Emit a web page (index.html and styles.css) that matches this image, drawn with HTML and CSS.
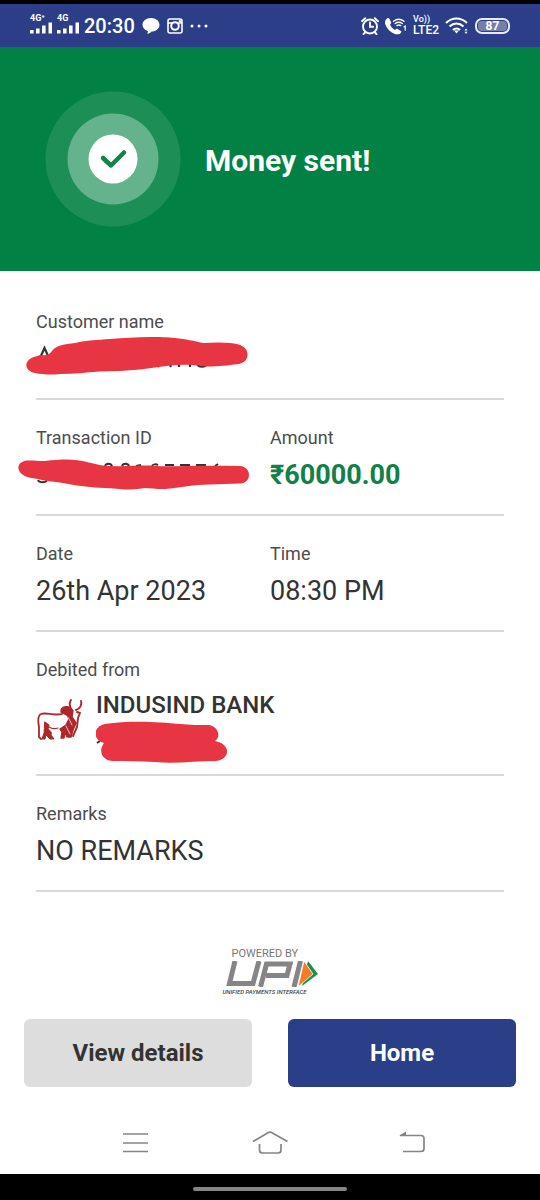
FILE: index.html
```html
<!DOCTYPE html>
<html lang="en">
<head>
<meta charset="utf-8">
<meta name="viewport" content="width=device-width, initial-scale=1">
<title>Money sent</title>
<link rel="stylesheet" href="styles.css">
</head>
<body>
<div class="status">
  <div class="status-left">
    <div class="signal"><span class="net">4G⁺</span>
      <svg class="icon" width="22" height="12" viewBox="0 0 22 12" fill="#fff"><path d="M0 8h3.600v3.500H0zM6 6.500h3.600v5H6zM12 3.500h3.600v8H12zM18.500.5H22v11h-3.500z"/></svg>
    </div>
    <div class="signal"><span class="net">4G</span>
      <svg class="icon" width="22" height="12" viewBox="0 0 22 12" fill="#fff"><path d="M0 8h3.600v3.500H0zM6 6.500h3.600v5H6zM12 3.500h3.600v8H12zM18.500.5H22v11h-3.500z"/></svg>
    </div>
    <span class="clock">20:30</span>
    <svg class="icon" width="18" height="18" viewBox="0 0 18 18" fill="#fff"><path d="M9 1c5 0 8.500 3 8.500 6.800S14 14.600 9.500 14.600c-1 1.300-2.500 2.200-4.500 2.400.8-1 1-2 .8-3C2.500 13 .5 10.600.5 7.800.5 4 4 1 9 1z"/></svg>
    <svg class="icon" width="16" height="16" viewBox="0 0 16 16" fill="none" stroke="#fff"><rect x="1" y="1" width="14" height="14" rx="2" stroke-width="1.600"/><path d="M1 5h4M11 5h4" stroke-width="1.400"/><circle cx="8" cy="8" r="3.800" stroke-width="2"/><path d="M12 2.500h1.800v1.600H12z" fill="#fff" stroke-width=".6"/></svg>
    <svg class="icon" width="18" height="4" viewBox="0 0 18 4" fill="#fff"><circle cx="2" cy="2" r="1.500"/><circle cx="9" cy="2" r="1.500"/><circle cx="16" cy="2" r="1.500"/></svg>
  </div>
  <div class="status-right">
    <svg class="icon" width="18" height="18" viewBox="0 0 18 18" fill="none" stroke="#fff" stroke-width="1.900" stroke-linecap="round"><circle cx="9" cy="9.500" r="7"/><path d="M9 5.500v4.200h3.200M1 4.200 4.200 1.200M17 4.200l-3.200-3M4 15.500l-1.500 1.700M14 15.500l1.500 1.700"/></svg>
    <svg class="icon" width="22" height="18" viewBox="0 0 22 18" fill="none" stroke="#fff" stroke-linecap="round"><path fill="#fff" stroke="none" d="M1 2.500C2.200.8 3.500.5 4.200 1.500L6 5c.5 1-.2 1.700-1 2.400 1 2.500 2.700 4.400 5 5.500 1-.8 1.700-1.500 2.700-1l3.200 2c1 .7.300 2-1.400 3.100C8.500 19 .5 11-.1 5.500 0 4.300.4 3.400 1 2.500z"/><path stroke-width="1.400" d="M8.500 4.300c3.200-2.500 7.300-2.500 10.500 0M10.200 6.500c2.300-1.700 4.800-1.700 7.100 0M12 8.600c1.200-.9 2.400-.9 3.600 0"/><path stroke-width="1.200" d="M19 9.800l1.200-.8v4.200"/></svg>
    <div class="lte"><span>Vo))</span><span class="lte-name">LTE2</span></div>
    <svg class="icon" width="24" height="18" viewBox="0 0 24 18" fill="none" stroke="#fff" stroke-width="2.200"><path d="M1 6c6.300-6 14.700-6 21 0M4.500 9.500c4.200-4 9.800-4 14 0M8 13c2-2 5-2 7 0"/><path d="M9 13.500h5l-2.500 3z" fill="#fff" stroke="none"/><path d="M19.500 13.500 21 11.500l1.500 2zM19.500 14.800h3L21 17z" fill="#fff" stroke="none"/></svg>
    <div class="battery"><span class="battery-level">87</span></div>
  </div>
</div>

<header class="hero">
  <svg class="tick" width="136" height="136" viewBox="0 0 136 136"><circle cx="68" cy="68" r="67.500" fill="#1d8f56"/><circle cx="68" cy="68" r="45.500" fill="#65b38c"/><circle cx="68" cy="68" r="24.500" fill="#fff"/><path d="M58 67l8 7.500L79 61.500" fill="none" stroke="#138348" stroke-width="4.500" stroke-linecap="round" stroke-linejoin="round"/></svg>
  <h1 class="title">Money sent!</h1>
</header>

<main class="details">
  <section class="row">
    <div class="cell">
      <h2 class="label">Customer name</h2>
      <div class="value hidden-value">
        <svg class="scribble" width="240" height="40" viewBox="0 0 240 40"><g fill="none" stroke="#333" stroke-width="2.200"><path d="M22 21l4.500-10L31 21M125 27c1 4 9 4 10 0M140 30l3-7M153 30l-3-7M161 22v8M172 22v8M179 26c1 5 9 5 10 0"/></g><path fill="#e83543" d="M20 18.500C26 18 31 19 34 14 38 8 47 7.500 57 6 69 3 80 3 92 2c14-1 26-2 40-2 10 0 17 0 25 1 11 1 19 3 28 5 9-.500 18-1 27 0 12 1 17.500 5 17.500 11.500S225 27 216 27.500c-10 1.500-19 2-29 2-12-2-23-2-35-1-10 1-20 3-30 4-13 1-27 2-40 2-14 1-27 2.500-40 2.500-9 1-17 .5-25-1-12-2-12-15 3-17z"/></svg>
      </div>
    </div>
  </section>
  <section class="row">
    <div class="cell">
      <h2 class="label">Transaction ID</h2>
      <div class="value hidden-value">
        <svg class="scribble" width="240" height="40" viewBox="0 0 240 40"><g fill="none" stroke="#333" stroke-width="2"><path d="M20 27c1 3 8 3 9 0M87 13c1-3 6-3 7 0M104 13c1-3 6-3 7 0M118 13l5-1M134 13c1-2 4-2 6-1M147 12h9M162 12h10M178 12h10M197 13l3-2"/></g><path fill="#e83543" d="M9 7.500c8-.5 12 1 18 .5 8-1 15-1.500 22-1.500 14 0 24 4 36 6 15 1.500 31 0 47 0 12 1 24 1 36 .5 18-.5 37-.5 54 0 12 1 12 17 0 17.500-10 .5-20 .5-30 1-16 0-30 3-45 4.500-7 .5-14-1-20-1-7 1-13 1.500-20 1.500-10-1-20-1.500-30-2-13-1-24-3-35-5-9-1-17-2-25-4C-3 24-4 9 9 7.500z"/></svg>
      </div>
    </div>
    <div class="cell">
      <h2 class="label">Amount</h2>
      <div class="value amount">₹60000.00</div>
    </div>
  </section>
  <section class="row">
    <div class="cell">
      <h2 class="label">Date</h2>
      <div class="value">26th Apr 2023</div>
    </div>
    <div class="cell">
      <h2 class="label">Time</h2>
      <div class="value">08:30 PM</div>
    </div>
  </section>
  <section class="row bank-row">
    <div class="cell">
      <h2 class="label">Debited from</h2>
      <div class="bank">
        <svg class="icon" width="48" height="46" viewBox="0 0 48 46" fill="none" stroke="#ad272b" stroke-linecap="round" stroke-linejoin="round"><path stroke-width="1.800" d="M26 15C18 17 10 13 5 15c-4 2-3 8-2 13v10l2 2"/><path fill="#ad272b" stroke-width="1" d="M9 23l4 3-1 4c3 2 4 4 3 6l3 4h-4l-4-4-1 4H6l2-6z"/><path stroke-width="1.200" d="M13 28c3 2 6 2 9 1"/><path fill="#ad272b" stroke-width="1.400" d="M25 13c0-5 4-6 8-5l4 4-1 6 4 6-3 7-2 7h-4l-2-5-1 6h-3l1-6-2-3 6-4 3-6-2-4z"/><path stroke-width="1.900" d="M36 11c-3-4-3-7-1-10M40 11c4-1 6-5 5-9M41 13l3 1-2 5-1 9-4 9"/><path stroke="#fff" stroke-width=".7" d="M32 18l4 8M30 27l4 8"/></svg>
        <div class="account">
          <div class="bank-name">INDUSIND BANK</div>
          <svg class="icon" width="134" height="42" viewBox="0 0 134 42"><path d="M1 22l3-2" stroke="#333" stroke-width="2"/><path fill="#e83543" d="M9 3C35-1 64 1 84 3c10 1 20 1 29 1 10 2 12 12 6 16 16 3 16 18 1 20-20 0-41 3-61 1-15-1-30-1-43-1-10-1-14-10-8-18C-4 19-3 5 9 3z"/></svg>
        </div>
      </div>
    </div>
  </section>
  <section class="row">
    <div class="cell">
      <h2 class="label">Remarks</h2>
      <div class="value">NO REMARKS</div>
    </div>
  </section>
</main>

<footer class="footer">
  <div class="upi">
    <span class="powered">POWERED BY</span>
    <svg class="icon upi-mark" width="92" height="26" viewBox="0 0 92 26" role="img" aria-label="UPI"><g fill="none" stroke="#858585" stroke-width="5"><path d="M9 0L3.500 22.500H27L33 0"/><path d="M34.500 26L40.500 3H64L61 14.500H40"/><path d="M74.500 0L68 26"/></g><path fill="#159447" d="M82 0l10 13-16 12z"/><path fill="#f47b2a" stroke="#fff" stroke-width=".8" d="M78 0l9 13-15 13z"/></svg>
    <span class="upi-name">UNIFIED PAYMENTS INTERFACE</span>
  </div>
  <div class="actions">
    <button class="btn btn-light" type="button">View details</button>
    <button class="btn btn-primary" type="button">Home</button>
  </div>
</footer>

<nav class="navbar">
  <button class="nav-btn" type="button" aria-label="Recent apps"><svg class="icon" width="40" height="28" viewBox="0 0 40 28" fill="none" stroke="#858585" stroke-width="1.700"><path d="M8 5h25M8 14h25M8 22.500h25"/></svg></button>
  <button class="nav-btn" type="button" aria-label="Home screen"><svg class="icon" width="40" height="28" viewBox="0 0 40 28" fill="none" stroke="#858585" stroke-width="1.700" stroke-linejoin="round"><path d="M3 12.500L18 3.700q2-1 4 0L37.500 12.500M9.500 15v6q0 3 3 3h15.500q3 0 3-3v-6"/></svg></button>
  <button class="nav-btn" type="button" aria-label="Back"><svg class="icon" width="40" height="28" viewBox="0 0 40 28" fill="none" stroke="#858585" stroke-width="1.700"><path d="M15 6.500h21q3 0 3 3v10q0 3-3 3H18"/><path d="M14 6.800l7-4.300v4.300z" fill="#858585" stroke="none"/></svg></button>
</nav>
<div class="gesture"><div class="gesture-bar"></div></div>
</body>
</html>
```
FILE: styles.css
```css
* {
  box-sizing: border-box;
}

body {
  margin: 0;
  min-height: 100vh;
  display: flex;
  flex-direction: column;
  background: #fff;
  color: #333;
  font-family: Roboto, "Noto Sans", sans-serif;
}

.icon {
  display: block;
}

.status {
  display: flex;
  justify-content: space-between;
  align-items: center;
  height: 47px;
  padding: 0 30px;
  border-top: 4px solid #000;
  background: #2b3e87;
  color: #fff;
}

.status-left,
.status-right {
  display: flex;
  align-items: center;
  gap: 6px;
}

.status-left {
  gap: 7px;
}

.signal {
  display: flex;
  flex-direction: column;
  width: 20px;
  padding-bottom: 2px;
}

.net {
  font-size: 9px;
  font-weight: 700;
  line-height: 7px;
  white-space: nowrap;
}

.clock {
  font-size: 20px;
  font-weight: 500;
  line-height: 24px;
}

.lte {
  display: flex;
  flex-direction: column;
  font-size: 9px;
  font-weight: 500;
  line-height: 9px;
}

.lte-name {
  font-size: 12px;
  line-height: 12px;
}

.battery {
  width: 35px;
  height: 16px;
  padding: 1px;
  border: 2px solid #e8eaf3;
  border-radius: 7px;
}

.battery-level {
  display: block;
  border-radius: 4px;
  background: #747fad;
  font-size: 12px;
  font-weight: 700;
  line-height: 10px;
  text-align: center;
}

.hero {
  display: flex;
  align-items: center;
  gap: 24px;
  height: 224px;
  padding: 0 24px 0 45px;
  background: #028144;
}

.title {
  margin: 0;
  padding-top: 4px;
  color: #fff;
  font-size: 30px;
  font-weight: 700;
  line-height: 36px;
}

.details {
  padding: 13px 36px 0;
}

.row {
  display: grid;
  grid-template-columns: 1fr 1fr;
  padding: 26px 0 21px;
  border-bottom: 2px solid #dadada;
}

.bank-row {
  grid-template-columns: 1fr;
  padding-bottom: 11px;
}

.label {
  margin: 0 0 7px;
  color: #4c4c4c;
  font-size: 18px;
  font-weight: 400;
  line-height: 24px;
}

.value {
  font-size: 27px;
  line-height: 36px;
}

.amount {
  color: #11804a;
  font-weight: 700;
}

.hidden-value {
  position: relative;
  height: 36px;
}

.scribble {
  position: absolute;
  top: -4px;
  left: -18px;
}

.bank {
  display: flex;
  align-items: flex-start;
  gap: 12px;
}

.bank > .icon {
  margin-top: 10px;
}

.account {
  flex: 1;
}

.bank-name {
  font-size: 24px;
  font-weight: 500;
  line-height: 32px;
}

.footer {
  padding: 54px 24px 0;
}

.upi {
  display: flex;
  flex-direction: column;
  width: fit-content;
  margin: 0 auto 22px;
}

.powered {
  padding-left: 9px;
  color: #777;
  font-size: 11px;
  line-height: 15px;
}

.upi-mark {
  margin-left: 3px;
}

.upi-name {
  color: #444;
  font-size: 6px;
  font-style: italic;
  font-weight: 500;
  line-height: 10px;
}

.actions {
  display: grid;
  grid-template-columns: 1fr 1fr;
  gap: 36px;
}

.btn {
  height: 68px;
  border: 0;
  border-radius: 6px;
  font-family: inherit;
  font-size: 24px;
  font-weight: 700;
}

.btn-light {
  background: #ddd;
  color: #333;
}

.btn-primary {
  background: #2a3f87;
  color: #fff;
}

.navbar {
  flex: 1;
  display: grid;
  grid-template-columns: repeat(3, 1fr);
  align-items: center;
  justify-items: center;
  padding: 24px 12.5% 0;
}

.nav-btn {
  padding: 0;
  border: 0;
  background: none;
}

.gesture {
  display: flex;
  justify-content: center;
  align-items: center;
  height: 26px;
  padding-top: 4px;
  background: #000;
}

.gesture-bar {
  width: 154px;
  height: 4px;
  border-radius: 2px;
  background: #858585;
}
```
